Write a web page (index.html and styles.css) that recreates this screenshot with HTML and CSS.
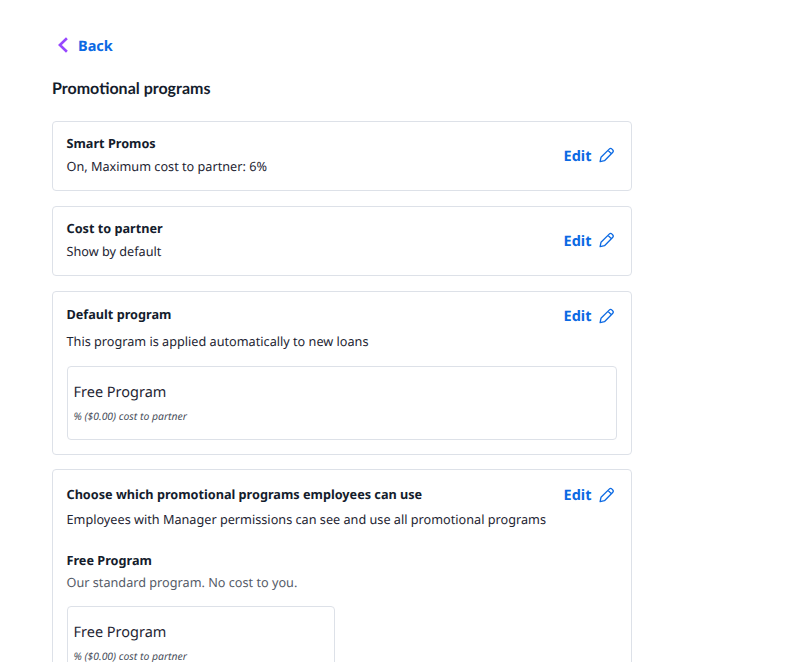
FILE: index.html
```html
<!DOCTYPE html>
<html lang="en">
<head>
    <meta charset="UTF-8">
    <meta name="viewport" content="width=device-width, initial-scale=1.0">
    <title>Promotional programs</title>
    <link rel="stylesheet" href="styles.css">
</head>
<body>
    <svg class="sprite" width="0" height="0">
        <symbol id="pencil" viewBox="0 0 16 16">
            <path d="M1.1 14.7 2 10.3 10.2 2.1a2 2 0 0 1 2.8 0l.6.6a2 2 0 0 1 0 2.8L5.5 13.7Z M9 3.4l3.4 3.4"/>
        </symbol>
    </svg>

    <main class="page">
        <a class="back">
            <svg class="chevron" width="10" height="16" viewBox="0 0 10 16"><path d="M8.9 1.2 1.9 8l7 6.8"/></svg>
            <span>Back</span>
        </a>
        <h1>Promotional programs</h1>

        <section class="card summary">
            <div class="card-row">
                <div>
                    <h2>Smart Promos</h2>
                    <p>On, Maximum cost to partner: 6%</p>
                </div>
                <a class="edit">Edit <svg width="16" height="16"><use href="#pencil"/></svg></a>
            </div>
        </section>

        <section class="card summary">
            <div class="card-row">
                <div>
                    <h2>Cost to partner</h2>
                    <p>Show by default</p>
                </div>
                <a class="edit">Edit <svg width="16" height="16"><use href="#pencil"/></svg></a>
            </div>
        </section>

        <section class="card default-program">
            <div class="card-row">
                <h2>Default program</h2>
                <a class="edit">Edit <svg width="16" height="16"><use href="#pencil"/></svg></a>
            </div>
            <p>This program is applied automatically to new loans</p>
            <div class="program">
                <div class="program-name">Free Program</div>
                <div class="program-cost">% ($0.00) cost to partner</div>
            </div>
        </section>

        <section class="card employee-programs">
            <div class="card-row">
                <h2>Choose which promotional programs employees can use</h2>
                <a class="edit">Edit <svg width="16" height="16"><use href="#pencil"/></svg></a>
            </div>
            <p>Employees with Manager permissions can see and use all promotional programs</p>
            <h3>Free Program</h3>
            <p class="muted">Our standard program. No cost to you.</p>
            <div class="program half">
                <div class="program-name">Free Program</div>
                <div class="program-cost">% ($0.00) cost to partner</div>
            </div>
        </section>
    </main>
</body>
</html>
```
FILE: styles.css
```css
* {
    box-sizing: border-box;
}
body {
    margin: 0;
    height: 100vh;
    overflow: hidden;
    background: #fff;
    color: #1e2533;
    font-family: "Noto Sans", sans-serif;
    font-size: 12.68px;
    line-height: 22px;
    text-rendering: geometricPrecision;
}
h1, h2, h3, p {
    margin: 0;
}
.sprite {
    position: absolute;
}
.page {
    width: 580px;
    height: 100vh;
    margin-left: 52px;
    padding-top: 34px;
    overflow: hidden;
}
.back {
    display: flex;
    align-items: center;
    gap: 10px;
    height: 22px;
    padding-left: 6px;
    color: #0b69e3;
    font-size: 14.5px;
    font-weight: 700;
}
.back span {
    padding-top: 1px;
}
.chevron path {
    fill: none;
    stroke: #9747ff;
    stroke-width: 2.6;
}
h1 {
    margin: 22px 0 21px;
    color: #141c2c;
    font-family: Lato, sans-serif;
    font-size: 16px;
    font-weight: 700;
    line-height: 22px;
}
h2, h3 {
    color: #141c2c;
    font-size: 12.68px;
    font-weight: 700;
    line-height: 22px;
}
.card {
    margin-bottom: 15px;
    padding: 0 14px 0 13.5px;
    border: 1px solid #dde1e8;
    border-radius: 4px;
}
.card-row {
    display: flex;
    align-items: center;
    justify-content: space-between;
}
.summary {
    height: 70px;
    padding-top: 10px;
}
.summary p {
    margin-top: 1px;
}
.edit {
    display: flex;
    align-items: center;
    gap: 7px;
    margin: 0 2.5px -1px 0;
    padding-top: 1px;
    color: #0b69e3;
    font-size: 14.5px;
    font-weight: 700;
}
.edit svg {
    margin-bottom: 1px;
    fill: none;
    stroke: #0b69e3;
    stroke-width: 1.3;
    stroke-linejoin: round;
}
.default-program {
    height: 164px;
    padding-top: 11px;
}
.default-program .edit {
    margin-bottom: -2px;
    padding-top: 2px;
}
.default-program p {
    margin-top: 5px;
}
.program {
    height: 74px;
    margin-top: 14px;
    padding: 14px 6px 0;
    border: 1px solid #dde1e8;
    border-radius: 4px;
}
.program-name {
    font-size: 14.5px;
}
.program-cost {
    margin-top: 3px;
    color: #4a505c;
    font-size: 10.4px;
    font-style: italic;
}
.employee-programs {
    height: 270px;
    margin-top: -1px;
    padding-top: 13px;
}
.employee-programs h3 {
    margin-top: 19px;
}
.employee-programs p {
    margin-top: 3px;
}
.employee-programs .muted {
    margin-top: 0;
    color: #565c68;
}
.half {
    width: 268px;
    margin-top: 13px;
}
```
